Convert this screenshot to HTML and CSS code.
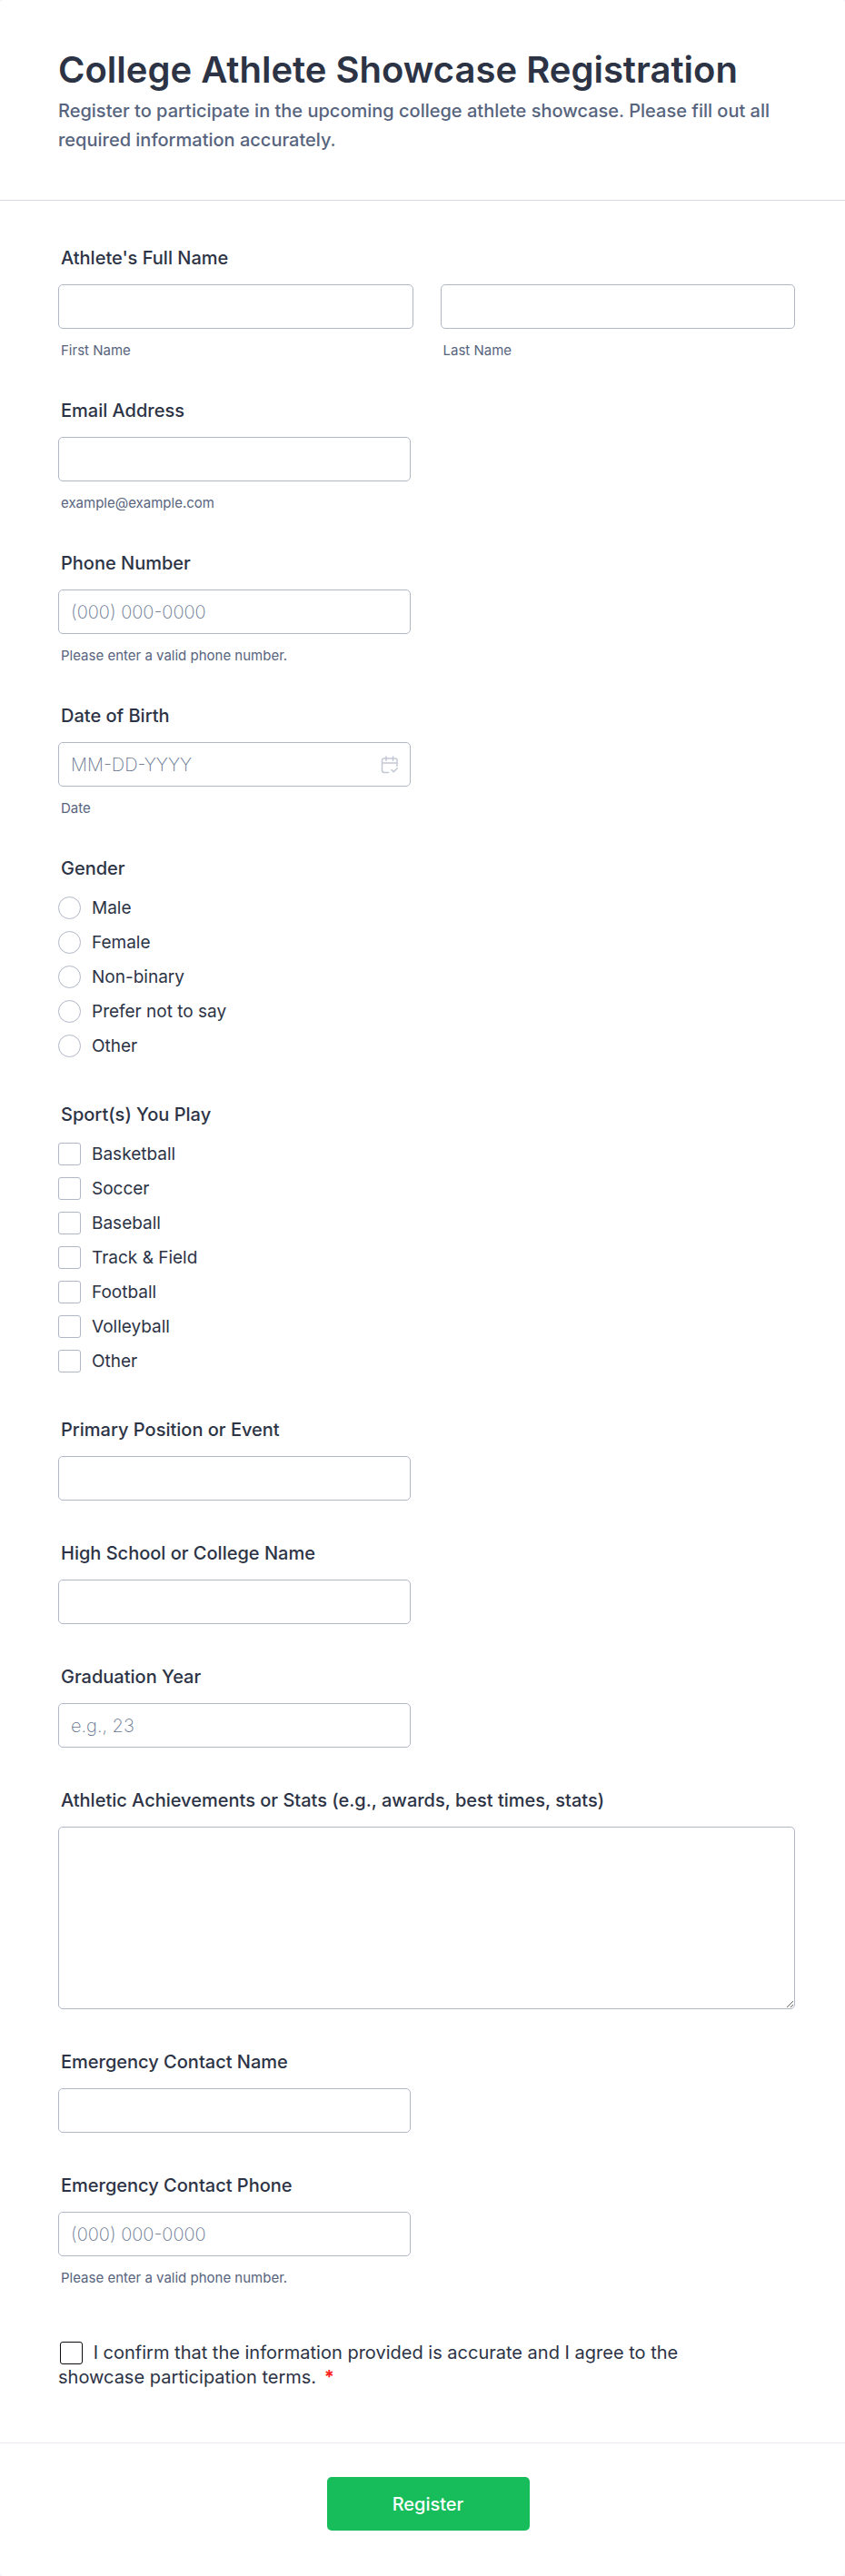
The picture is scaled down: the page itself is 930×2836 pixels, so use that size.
FILE: index.html
```
<!DOCTYPE html>
<html lang="en">
<head>
    <meta charset="UTF-8">
    <meta name="viewport" content="width=device-width, initial-scale=1.0">
    <title>College Athlete Showcase Registration</title>
    <link rel="stylesheet" href="styles.css">
</head>
<body>
    <form class="form-container">
        <header class="form-header">
            <h1>College Athlete Showcase Registration</h1>
            <p>Register to participate in the upcoming college athlete showcase. Please fill out all required information accurately.</p>
        </header>

        <div class="form-body">
            <fieldset class="field">
                <legend class="field-label">Athlete's Full Name</legend>
                <div class="name-row">
                    <div>
                        <input type="text" class="text-input" id="firstName">
                        <label class="hint" for="firstName">First Name</label>
                    </div>
                    <div>
                        <input type="text" class="text-input" id="lastName">
                        <label class="hint" for="lastName">Last Name</label>
                    </div>
                </div>
            </fieldset>

            <div class="field half">
                <label class="field-label" for="email">Email Address</label>
                <input type="email" class="text-input" id="email">
                <span class="hint">example@example.com</span>
            </div>

            <div class="field half">
                <label class="field-label" for="phone">Phone Number</label>
                <input type="tel" class="text-input" id="phone" placeholder="(000) 000-0000">
                <span class="hint">Please enter a valid phone number.</span>
            </div>

            <div class="field half">
                <label class="field-label" for="birthDate">Date of Birth</label>
                <div class="date-box">
                    <input type="text" class="text-input" id="birthDate" placeholder="MM-DD-YYYY">
                    <svg class="calendar-icon" viewBox="0 0 20 20" aria-hidden="true">
                        <path d="M8.500 18.500H4A2.500 2.500 0 0 1 1.500 16V5A2 2 0 0 1 3.500 3H16A2 2 0 0 1 18 5V11.500M1.500 8H18M6 1V5.200M13.500 1V5.200M12 15.500L14.200 17.700L18.300 13.700"/>
                    </svg>
                </div>
                <span class="hint">Date</span>
            </div>

            <fieldset class="field">
                <legend class="field-label">Gender</legend>
                <div class="options">
                    <label class="option"><input type="radio" name="gender">Male</label>
                    <label class="option"><input type="radio" name="gender">Female</label>
                    <label class="option"><input type="radio" name="gender">Non-binary</label>
                    <label class="option"><input type="radio" name="gender">Prefer not to say</label>
                    <label class="option"><input type="radio" name="gender">Other</label>
                </div>
            </fieldset>

            <fieldset class="field">
                <legend class="field-label">Sport(s) You Play</legend>
                <div class="options">
                    <label class="option"><input type="checkbox" name="sport">Basketball</label>
                    <label class="option"><input type="checkbox" name="sport">Soccer</label>
                    <label class="option"><input type="checkbox" name="sport">Baseball</label>
                    <label class="option"><input type="checkbox" name="sport">Track &amp; Field</label>
                    <label class="option"><input type="checkbox" name="sport">Football</label>
                    <label class="option"><input type="checkbox" name="sport">Volleyball</label>
                    <label class="option"><input type="checkbox" name="sport">Other</label>
                </div>
            </fieldset>

            <div class="field half">
                <label class="field-label" for="position">Primary Position or Event</label>
                <input type="text" class="text-input" id="position">
            </div>

            <div class="field half">
                <label class="field-label" for="school">High School or College Name</label>
                <input type="text" class="text-input" id="school">
            </div>

            <div class="field half">
                <label class="field-label" for="gradYear">Graduation Year</label>
                <input type="text" class="text-input" id="gradYear" placeholder="e.g., 23">
            </div>

            <div class="field">
                <label class="field-label" for="stats">Athletic Achievements or Stats (e.g., awards, best times, stats)</label>
                <textarea class="text-input" id="stats"></textarea>
            </div>

            <div class="field half">
                <label class="field-label" for="contactName">Emergency Contact Name</label>
                <input type="text" class="text-input" id="contactName">
            </div>

            <div class="field half">
                <label class="field-label" for="contactPhone">Emergency Contact Phone</label>
                <input type="tel" class="text-input" id="contactPhone" placeholder="(000) 000-0000">
                <span class="hint">Please enter a valid phone number.</span>
            </div>

            <div class="terms">
                <input type="checkbox" id="terms" required>
                <label for="terms">I confirm that the information provided is accurate and I agree to the showcase participation terms.</label>
                <span class="required">*</span>
            </div>
        </div>

        <div class="form-footer">
            <button type="submit">Register</button>
        </div>
    </form>
</body>
</html>
```
FILE: styles.css
```
:root {
    --text-color: #2c3345;
    --muted-color: #57647e;
    --border-color: #b2b7c7;
    --line-color: #d7d8e1;
    --button-color: #18bd5b;
}

* {
    box-sizing: border-box;
}

body {
    margin: 0;
    font-family: Inter, "Liberation Sans", sans-serif;
    font-size: 20px;
    color: var(--text-color);
    background: #f3f3fa;
}

.form-container {
    background: #fff;
    border-radius: 4px;
}

.form-header {
    padding: 53px 55px 49px 64px;
    border-bottom: 1px solid var(--line-color);
}

.form-header h1 {
    margin: 0 0 5px;
    font-size: 40px;
    font-weight: 600;
    line-height: 48px;
}

.form-header p {
    margin: 0 0 1px;
    font-weight: 500;
    line-height: 32px;
    color: var(--muted-color);
}

.form-body {
    padding: 51px 55px 58px 64px;
}

.field {
    margin: 0 0 46px;
    padding: 0;
    border: 0;
}

.half {
    max-width: 388px;
}

.field-label {
    display: block;
    margin-bottom: 17px;
    padding: 0 3px;
    font-weight: 500;
    line-height: 24px;
}

.text-input {
    display: block;
    width: 100%;
    height: 49px;
    padding: 0 13px;
    border: 1px solid var(--border-color);
    border-radius: 5px;
    background: #fff;
    font-family: inherit;
    font-size: 20px;
    color: var(--text-color);
}

.text-input::placeholder {
    color: #66758f;
    font-weight: 200;
}

textarea.text-input {
    height: 201px;
    padding: 12px 13px;
}

.hint {
    display: block;
    margin-top: 16px;
    padding: 0 3px;
    font-size: 15px;
    line-height: 16px;
    color: var(--muted-color);
}

.name-row {
    display: grid;
    grid-template-columns: 1fr 1fr;
    gap: 30px;
}

.date-box {
    position: relative;
}

/* sits over the right end of the date input */
.calendar-icon {
    position: absolute;
    top: 15px;
    right: 13px;
    width: 20px;
    height: 20px;
    fill: none;
    stroke: #c3c8d5;
    stroke-width: 1.5;
    stroke-linecap: round;
    stroke-linejoin: round;
}

.options {
    display: flex;
    flex-direction: column;
    align-items: flex-start;
    gap: 13px;
    padding: 2px 0 5px;
}

.option {
    display: flex;
    align-items: center;
    gap: 12px;
    font-size: 19px;
    line-height: 25px;
}

input[type="radio"],
input[type="checkbox"] {
    appearance: none;
    width: 25px;
    height: 25px;
    margin: 0;
    border: 1px solid var(--border-color);
    border-radius: 3px;
    background: #fff;
}

input[type="radio"] {
    border-radius: 50%;
}

input:checked {
    background: var(--button-color);
}

.terms {
    max-width: 760px;
    padding-top: 15px;
    line-height: 27px;
}

.terms input[type="checkbox"] {
    margin: 0 6px 0 2px;
    border: 1px solid #0b0b12;
    vertical-align: -6px;
}

.required {
    margin-left: 3px;
    color: #ff1f1f;
    font-weight: 700;
}

.form-footer {
    display: flex;
    justify-content: center;
    padding: 37px 52px 50px 64px;
    border-top: 1px solid #e9ebf3;
}

.form-footer button {
    min-width: 223px;
    height: 59px;
    border: 0;
    border-radius: 5px;
    background: var(--button-color);
    color: #fff;
    font-family: inherit;
    font-size: 20px;
    font-weight: 500;
    cursor: pointer;
}
```
